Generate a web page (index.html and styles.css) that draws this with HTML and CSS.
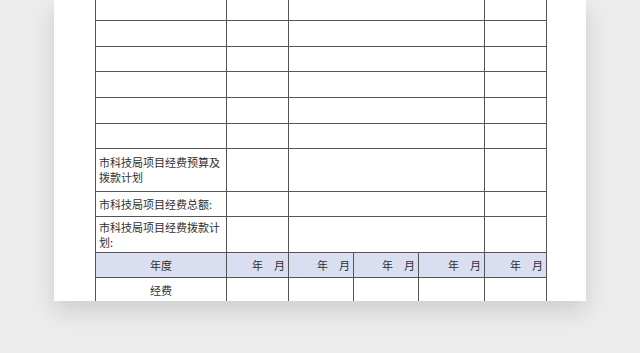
FILE: index.html
```html
<!DOCTYPE html>
<html lang="zh">
<head>
<meta charset="utf-8">
<link rel="stylesheet" href="styles.css">
</head>
<body>
<div class="stage">
  <div class="paper">
    <table class="sheet">
      <colgroup>
        <col class="c-label"><col class="c-a"><col class="c-b"><col class="c-c"><col class="c-d"><col class="c-e">
      </colgroup>
      <tbody>
        <tr class="r-cut"><td></td><td></td><td colspan="3"></td><td></td></tr>
        <tr class="r-26"><td></td><td></td><td colspan="3"></td><td></td></tr>
        <tr class="r-25"><td></td><td></td><td colspan="3"></td><td></td></tr>
        <tr class="r-26"><td></td><td></td><td colspan="3"></td><td></td></tr>
        <tr class="r-26"><td></td><td></td><td colspan="3"></td><td></td></tr>
        <tr class="r-25"><td></td><td></td><td colspan="3"></td><td></td></tr>
        <tr class="r-tall"><td class="lbl">市科技局项目经费预算及拨款计划</td><td></td><td colspan="3"></td><td></td></tr>
        <tr class="r-25"><td class="lbl">市科技局项目经费总额:</td><td></td><td colspan="3"></td><td></td></tr>
        <tr class="r-mid"><td class="lbl">市科技局项目经费拨款计划:</td><td></td><td colspan="3"></td><td></td></tr>
        <tr class="r-25 head"><td class="ctr">年度</td><td class="ym">年　月</td><td class="ym">年　月</td><td class="ym">年　月</td><td class="ym">年　月</td><td class="ym">年　月</td></tr>
        <tr class="r-26"><td class="ctr">经费</td><td></td><td></td><td></td><td></td><td></td></tr>
      </tbody>
    </table>
  </div>
</div>
</body>
</html>
```
FILE: styles.css
```css
html, body {
  margin: 0;
  padding: 0;
  background: #ececec;
  height: 353px;
  overflow: hidden;
}
.stage {
  padding-left: 54px;
}
.paper {
  width: 532px;
  height: 301px;
  background: #fff;
  overflow: hidden;
  box-shadow: 0 10px 22px rgba(0, 0, 0, 0.13);
  padding-left: 41px;
  box-sizing: border-box;
}
.sheet {
  border-collapse: collapse;
  table-layout: fixed;
  width: 452px;
  margin-top: -6px;
  font-family: "Noto Sans CJK SC", sans-serif;
  font-size: 11px;
  color: #2e2e2e;
}
.c-label { width: 131px; }
.c-a { width: 62px; }
.c-b { width: 65px; }
.c-c { width: 65px; }
.c-d { width: 66px; }
.c-e { width: 62px; }
.sheet td {
  border: 1px solid #555;
  padding: 0 3px;
  line-height: 15px;
  vertical-align: middle;
}
.r-cut td { height: 25px; }
.r-26 td { height: 25px; }
.r-25 td { height: 24px; }
.r-tall td { height: 42px; }
.r-mid td { height: 35px; }
.lbl { text-align: left; padding-left: 2px; }
.ctr { text-align: center; }
.ym { text-align: right; padding-right: 4px; }
.head td { background: #d9dff1; }
```
